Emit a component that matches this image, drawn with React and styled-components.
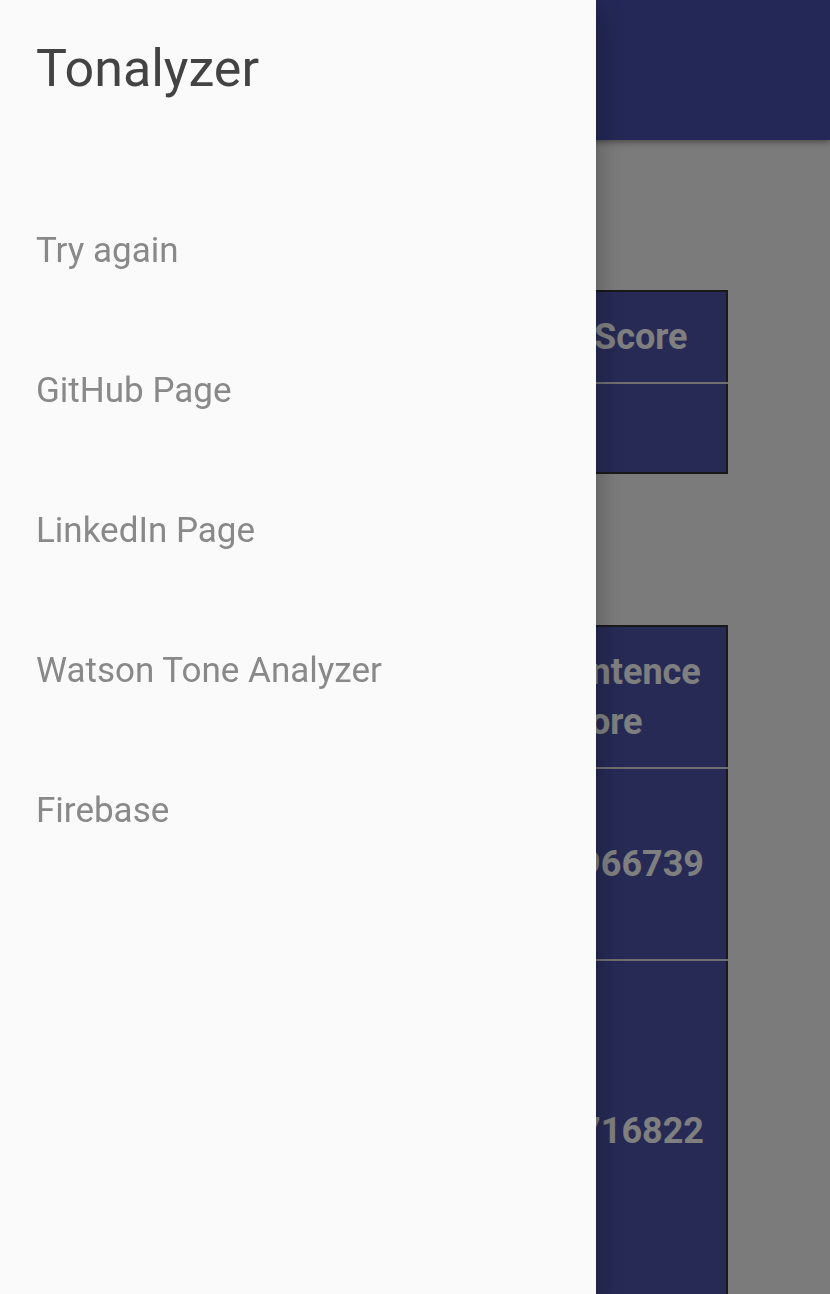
import React from 'react';
import styled, { createGlobalStyle } from 'styled-components';

const GlobalStyle = createGlobalStyle`
    html, body {
        margin: 0;
        padding: 0;
        height: 100%;
        overflow: hidden;
        background: #f6f6f6;
        font-family: Roboto, "Liberation Sans", Arial, sans-serif;
    }
    #root {
        height: 100%;
    }
`;

const Page = styled.div`
    min-height: 100%;
    background: #f6f6f6;
`;
const AppBar = styled.header`
    height: 140px;
    background: #4650ac;
    box-shadow: 0px 2px 4px -1px rgba(0, 0, 0, 0.2), 0px 4px 5px 0px rgba(0, 0, 0, 0.14),
        0px 1px 10px 0px rgba(0, 0, 0, 0.12);
`;
const Content = styled.main`
    display: flex;
    flex-direction: column;
    gap: 151px;
    padding: 150px 102px 0 101px;
`;
const Table = styled.table`
    width: 100%;
    table-layout: fixed;
    border-collapse: collapse;
    border: 2px solid #333;
    background: #4c54aa;
    color: #fff;
    font-size: 36px;
    font-weight: 700;
    line-height: 50px;
`;
const Row = styled.tr`
    line-height: ${p => p.$lh || 50}px;
    & + & {
        border-top: 2px solid #dedede;
    }
`;
const Cell = styled.td`
    padding: 20px ${p => p.$padRight || 24}px 20px 24px;
    vertical-align: middle;
    text-align: left;
`;
const Overlay = styled.div`
    position: fixed;
    inset: 0;
    background: rgba(0, 0, 0, 0.5);
`;
const Drawer = styled.nav`
    position: fixed;
    top: 0;
    left: 0;
    bottom: 0;
    width: 596px;
    background: #fafafa;
    box-shadow: 0px 8px 10px -5px rgba(0, 0, 0, 0.2), 0px 16px 24px 2px rgba(0, 0, 0, 0.14),
        0px 6px 30px 5px rgba(0, 0, 0, 0.12);
    padding: 39px 36px 0;
    box-sizing: border-box;
`;
const Title = styled.h1`
    margin: 0;
    font-size: 52px;
    font-weight: 400;
    line-height: 60px;
    color: #434343;
`;
const Menu = styled.ul`
    list-style: none;
    margin: 81px 0 0;
    padding: 0;
`;
const MenuItem = styled.li`
    height: 140px;
    display: flex;
    align-items: center;
    font-size: 35px;
    color: #898989;
`;

const links = ['Try again', 'GitHub Page', 'LinkedIn Page', 'Watson Tone Analyzer', 'Firebase'];

const App = () => {
    return (
        <>
            <GlobalStyle />
            <Page>
                <AppBar />
                <Content>
                    <Table>
                        <colgroup>
                            <col style={{ width: '468px' }} />
                            <col />
                        </colgroup>
                        <tbody>
                            <Row>
                                <Cell>Tone</Cell>
                                <Cell>Score</Cell>
                            </Row>
                            <Row $lh={48}>
                                <Cell>None</Cell>
                                <Cell></Cell>
                            </Row>
                        </tbody>
                    </Table>
                    <Table>
                        <colgroup>
                            <col style={{ width: '423px' }} />
                            <col />
                        </colgroup>
                        <tbody>
                            <Row>
                                <Cell>Sentence</Cell>
                                <Cell $padRight={20}>Sentence Score</Cell>
                            </Row>
                            <Row>
                                <Cell>
                                    Line one here
                                    <br />
                                    line two here
                                    <br />
                                    line three
                                </Cell>
                                <Cell $padRight={20}>0.966739</Cell>
                            </Row>
                            <Row>
                                <Cell>
                                    Line one here
                                    <br />
                                    line two here
                                    <br />
                                    line three
                                    <br />
                                    line four
                                    <br />
                                    line five
                                    <br />
                                    line six
                                </Cell>
                                <Cell $padRight={20}>0.716822</Cell>
                            </Row>
                        </tbody>
                    </Table>
                </Content>
            </Page>
            <Overlay />
            <Drawer>
                <Title>Tonalyzer</Title>
                <Menu>
                    {links.map(l => (
                        <MenuItem key={l}>{l}</MenuItem>
                    ))}
                </Menu>
            </Drawer>
        </>
    );
};

export default App;
